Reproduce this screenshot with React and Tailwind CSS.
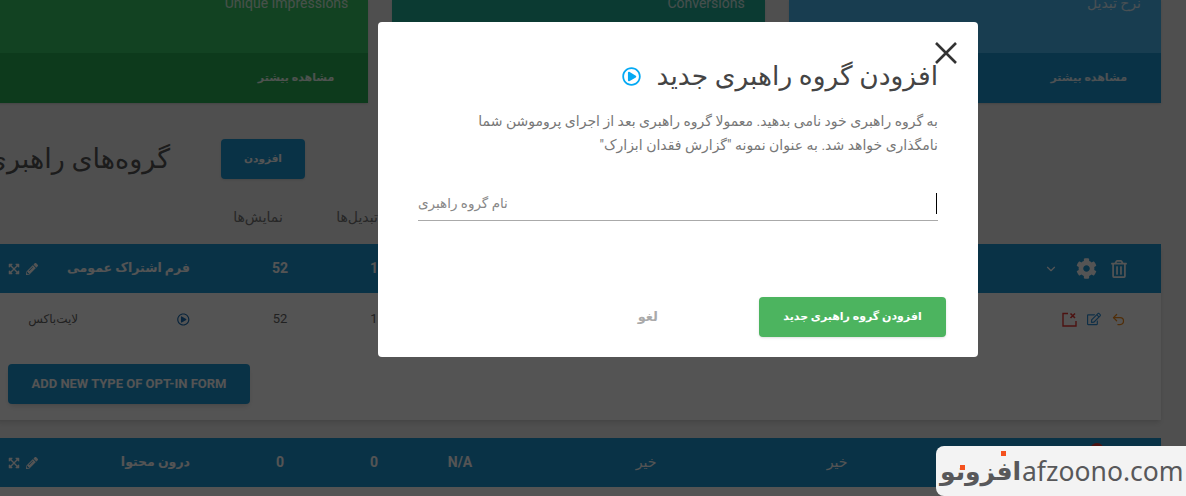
import { ChevronDown, Undo2 } from "lucide-react";
import { FaCog, FaExpandArrowsAlt, FaPencilAlt, FaRegEdit, FaRegPlayCircle, FaRegTrashAlt } from "react-icons/fa";

const cards = [
  { label: "Unique Impressions", body: "bg-[#37c867]", foot: "bg-[#2ab055]" },
  { label: "Conversions", body: "bg-[#24b098]", foot: "bg-[#1e98d5]" },
  { label: "نرخ تبدیل", body: "bg-[#4bb8f2]", foot: "bg-[#1e98d5]" },
];

function StatCard({ label, body, foot }) {
  return (
    <div className="shadow-sm">
      <div className={`h-[53px] overflow-hidden pr-5 text-right text-sm leading-5 text-white/80 ${body}`}>
        <div className="-mt-[7px]">{label}</div>
      </div>
      <div className={`flex h-[50px] items-center justify-end pr-[34px] text-[11px] font-bold text-white/90 ${foot}`}>
        <span dir="rtl">مشاهده بیشتر</span>
      </div>
    </div>
  );
}

function Cells({ values, className }) {
  return (
    <>
      <div className={`ml-[43px] w-[94px] text-center ${className}`}>{values[0]}</div>
      <div className={`w-[94px] text-center ${className}`}>{values[1]}</div>
      <div className={`w-[78px] text-center ${className}`}>{values[2]}</div>
      <div className={`ml-[54px] w-[186px] text-center ${className}`}>{values[3]}</div>
      <div className={`ml-[5px] w-[186px] text-center ${className}`}>{values[4]}</div>
    </>
  );
}

function GroupHeader({ name, values, children }) {
  return (
    <div className="flex h-[49px] items-center bg-[#1e98d5] text-white">
      <div className="flex w-[194px] items-center">
        <div className="ml-3 flex w-[30px] items-center gap-1.5 text-[12px]">
          <FaExpandArrowsAlt />
          <FaPencilAlt />
        </div>
        <div dir="rtl" className="flex-1 text-[12.5px] font-bold whitespace-nowrap">{name}</div>
      </div>
      <Cells values={values} className="text-[14px] font-bold" />
      {children}
    </div>
  );
}

function CloseBoxIcon() {
  return (
    <svg width="15" height="15" viewBox="0 0 15 15" fill="none" stroke="#e53935" strokeWidth="1.4">
      <path d="M6 1.5H1v12.5h13V9" />
      <path d="M8.5 1.5l4.5 4.5M13 1.5L8.5 6" strokeWidth="1.6" />
    </svg>
  );
}

export default function App() {
  return (
    <div className="relative h-[496px] w-full overflow-hidden bg-[#efefef] font-['Roboto','DejaVu_Sans',sans-serif]">
      <div className="-ml-1 w-[1165px]">
        <div className="grid grid-cols-3 gap-6">
          {cards.map((card) => (
            <StatCard key={card.label} {...card} />
          ))}
        </div>

        <div className="mt-9 flex h-10 items-center">
          <div dir="rtl" className="w-[174px] text-[27px] leading-10 whitespace-nowrap text-[#555]">گروه‌های راهبری</div>
          <button type="button" className="ml-[51px] h-10 w-[84px] rounded-sm bg-[#1e98d5] text-[10.5px] font-bold text-white shadow-sm">
            افزودن
          </button>
        </div>

        <div className="mt-7 flex h-5 text-[14px] leading-5 text-[#777]">
          <div className="ml-[237px] w-[50px] text-center whitespace-nowrap">نمایش‌ها</div>
          <div className="ml-[50px] w-[48px] text-center whitespace-nowrap">تبدیل‌ها</div>
        </div>

        <div className="mt-[17px] h-[176px] bg-white shadow-md">
          <GroupHeader name="فرم اشتراک عمومی" values={["52", "1", "", "", ""]}>
            <div className="ml-auto flex items-center gap-[13px] pr-[33px]">
              <ChevronDown size={14} strokeWidth={2} />
              <FaCog size={21} className="ml-[5px]" />
              <FaRegTrashAlt size={18} />
            </div>
          </GroupHeader>
          <div className="flex h-[52px] items-center text-[12px] text-[#666]">
            <div className="flex w-[194px] items-center">
              <div className="ml-8 w-[52px] text-center">لایت‌باکس</div>
              <FaRegPlayCircle size={13} className="ml-[99px] text-[#1e6fb5]" />
            </div>
            <Cells values={["52", "1", "", "", ""]} className="text-[13px]" />
            <div className="ml-auto flex items-center gap-[10px] pr-[35px]">
              <CloseBoxIcon />
              <FaRegEdit size={14} className="text-[#2f8fd8]" />
              <Undo2 size={15} strokeWidth={2} className="text-[#f28c1e]" />
            </div>
          </div>
          <button type="button" className="mt-[19px] ml-3 h-10 w-[242px] rounded-sm bg-[#1e98d5] text-[13px] font-bold text-white shadow-md">
            ADD NEW TYPE OF OPT-IN FORM
          </button>
        </div>

        <div className="mt-[18px] bg-white shadow-md">
          <GroupHeader name="درون محتوا" values={["0", "0", "N/A", <span key="a" className="font-normal">خیر</span>, <span key="b" className="font-normal">خیر</span>]}>
            <div className="mt-[5px] ml-[160px] h-[14px] w-[14px] self-start rounded-full bg-[#e53935]" />
          </GroupHeader>
          <div className="h-5" />
        </div>
      </div>

      <div className="absolute inset-0 bg-black/[.67]">
        <div className="absolute top-[22px] left-[378px] h-[335px] w-[600px] rounded-sm bg-white px-10 pt-[34px] pb-5">
          <svg className="absolute top-5 right-5" width="24" height="22" viewBox="0 0 24 22" fill="none" stroke="#333" strokeWidth="2.6">
            <path d="M2 1l20 20M22 1L2 21" />
          </svg>
          <div dir="rtl" className="flex h-10 items-center gap-[16px] text-[26.5px] text-[#444]">
            <span className="whitespace-nowrap">افزودن گروه راهبری جدید</span>
            <FaRegPlayCircle size={19} className="text-[#03a9f4]" />
          </div>
          <p dir="rtl" className="mt-[13px] text-[14px] leading-6 text-[#777]">
            به گروه راهبری خود نامی بدهید. معمولا گروه راهبری بعد از اجرای پروموشن شما
            <br />
            نامگذاری خواهد شد. به عنوان نمونه "گزارش فقدان ابزارک"
          </p>
          <div className="mt-[33px] flex h-[31px] items-center justify-between border-b border-[#aaa] pb-1">
            <span dir="rtl" className="text-[13.5px] text-[#888]">نام گروه راهبری</span>
            <span className="mr-px h-[21px] w-px bg-black" />
          </div>
          <div className="mt-[76px] -mr-2 flex items-center justify-end">
            <button type="button" className="mr-[101px] text-[13px] font-bold text-[#aaa]">لغو</button>
            <button type="button" className="h-10 w-[187px] rounded-sm bg-[#4cb45f] text-[11px] font-bold text-white shadow-sm">
              افزودن گروه راهبری جدید
            </button>
          </div>
        </div>
      </div>

      <div className="absolute right-0 bottom-0 flex h-[50px] w-[250px] items-center rounded-l-lg bg-[#f3f3f3] pl-1">
        <div className="relative w-[80px] text-center text-[25px] leading-none font-bold text-[#58585a]">
          افزونو
          <span className="absolute top-[-8px] left-[61px] h-[5px] w-[5px] bg-[#f4511e]" />
          <span className="absolute top-[6px] left-[20px] h-[5px] w-[5px] bg-[#f4511e]" />
        </div>
        <span className="ml-0.5 font-['Noto_Sans',sans-serif] text-[26.5px] leading-none text-[#58585a]">afzoono.com</span>
      </div>
    </div>
  );
}
